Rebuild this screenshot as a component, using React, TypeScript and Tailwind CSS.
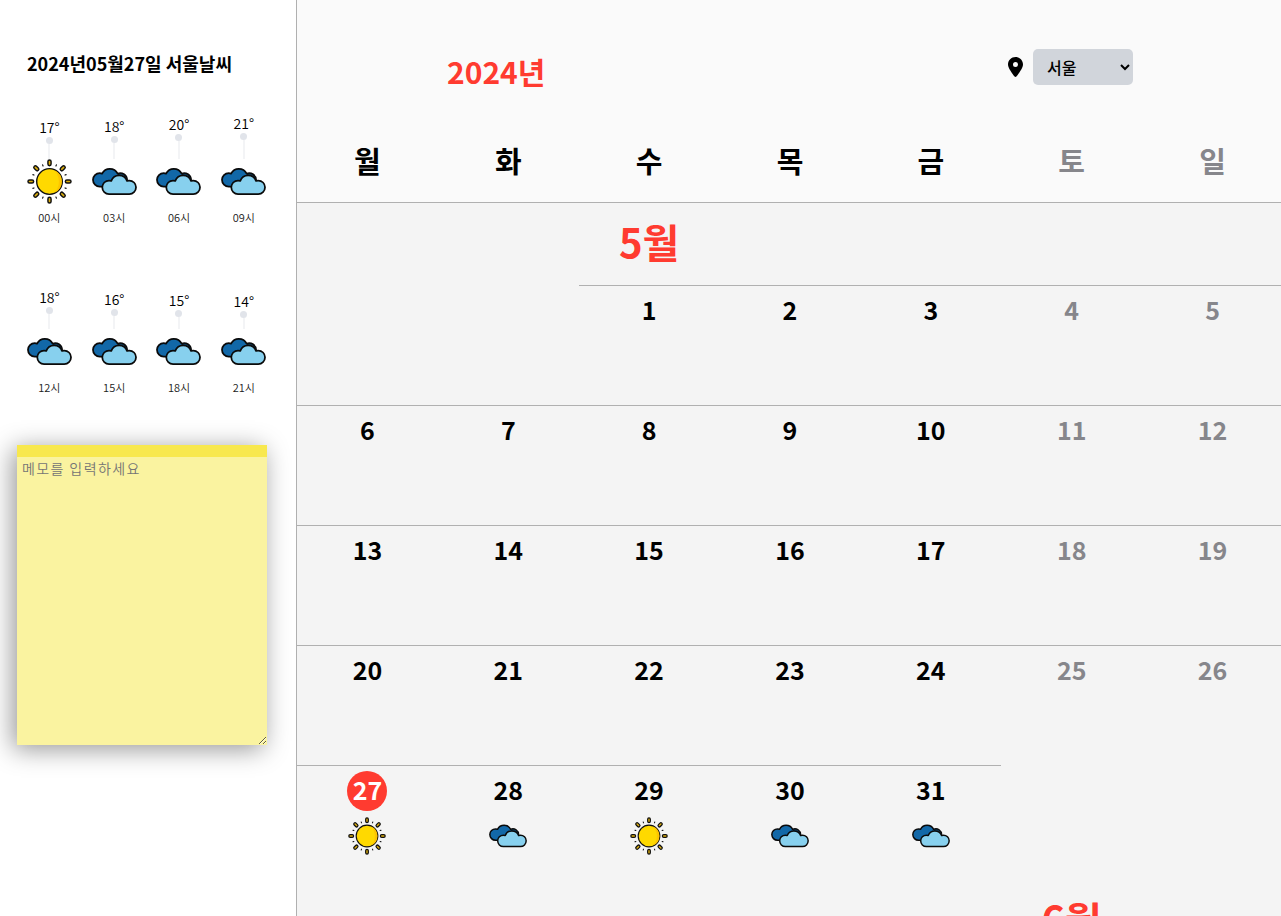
import React from 'react';

const KR = "font-['Noto_Sans_CJK_KR','Noto_Sans',sans-serif]";

function Sun({ className }: { className: string }) {
  const rays = [0, 45, 90, 135, 180, 225, 270, 315];
  return (
    <svg viewBox="0 0 46 46" className={className} aria-hidden="true">
      {rays.map((a) => (
        <g key={a} transform={`rotate(${a} 23 23)`}>
          <rect x="21.4" y="1" width="3.2" height="5.8" rx="1.6" fill="#dcae0e" stroke="#111" strokeWidth="1.5" />
          <path d="M23 4.6v1.2" stroke="#111" strokeWidth="1.2" strokeLinecap="round" transform="rotate(22.5 23 23)" />
        </g>
      ))}
      <circle cx="23" cy="23" r="13.1" fill="#ffd900" stroke="#111" strokeWidth="1.4" />
      <path d="M28 11.4a12.6 12.6 0 0 1 0 23.2a17 17 0 0 0 0-23.2z" fill="#fdc500" />
    </svg>
  );
}

function Clouds({ className }: { className: string }) {
  return (
    <svg viewBox="0 0 46 46" className={className} aria-hidden="true">
      <g stroke="#0a0a0a" strokeWidth="1.8" strokeLinejoin="round">
        <path
          d="M7.9 28.2a6.9 6.9 0 0 1 0-13.8q1.2 0 2.4.5a8.9 8.9 0 0 1 15.9 0a7 7 0 0 1 9.6 6.6q0 6-7 6.7z"
          fill="#1268a8"
        />
        <path d="M27 15.3q5.8-1.3 8.3 4.4l.4 2.6-6-1.5z" fill="#11507e" strokeWidth="0.8" />
        <path
          d="M17.4 35.8a6.9 6.9 0 0 1 0-13.8q1.4 0 2.3.4a8.6 8.6 0 0 1 16.1 0q1-.4 2.3-.4a6.9 6.9 0 0 1 0 13.8z"
          fill="#87d0ee"
        />
      </g>
    </svg>
  );
}

type Hour = { time: string; temp: number; stem: string; sunny?: boolean };

const morning: Hour[] = [
  { time: '00시', temp: 17, stem: 'h-[22px]', sunny: true },
  { time: '03시', temp: 18, stem: 'h-[23px]' },
  { time: '06시', temp: 20, stem: 'h-[25px]' },
  { time: '09시', temp: 21, stem: 'h-[26px]' },
];
const afternoon: Hour[] = [
  { time: '12시', temp: 18, stem: 'h-[22px]' },
  { time: '15시', temp: 16, stem: 'h-[20px]' },
  { time: '18시', temp: 15, stem: 'h-[19px]' },
  { time: '21시', temp: 14, stem: 'h-[18px]' },
];

function HourRow({ hours }: { hours: Hour[] }) {
  return (
    <div className="flex h-[126px] items-end">
      {hours.map((h) => (
        <div key={h.time} className="flex w-[64.8px] flex-col items-center">
          <span className="mb-px text-[14px] leading-[18px] font-[350]">
            {h.temp}
            <span className="inline-block font-[350]">°</span>
          </span>
          <div className={`flex flex-col items-center ${h.stem}`}>
            <span className="size-[7px] shrink-0 rounded-full bg-[#e1e4ea]" />
            <span className="w-[2px] grow bg-[#f3f4f6]" />
          </div>
          {h.sunny ? <Sun className="size-[45px]" /> : <Clouds className="size-[45px]" />}
          <span className="mt-[5px] text-[11px] leading-[16px] font-[350] text-[#222]">{h.time}</span>
        </div>
      ))}
    </div>
  );
}

function Sidebar() {
  return (
    <aside className="flex w-[297px] shrink-0 flex-col border-r border-[#b0b0b0] bg-white pl-[17px]">
      <h1 className="mt-[50px] ml-[10px] text-[18px] leading-[26px] font-bold text-black">
        2024년05월27일 서울날씨
      </h1>
      <div className="mt-[23px]">
        <HourRow hours={morning} />
      </div>
      <div className="mt-[44px]">
        <HourRow hours={afternoon} />
      </div>
      <textarea
        placeholder="메모를 입력하세요"
        className="mt-[50px] h-[300px] w-[250px] resize border-t-[12px] border-[#f8e84e] bg-[#faf3a0] px-[5px] py-px text-[14px] leading-[20px] font-[350] tracking-[1.4px] text-black shadow-[-4px_4px_24px_rgba(0,0,0,0.42)] outline-none placeholder:text-[#757575]"
      />
    </aside>
  );
}

const weekdays = ['월', '화', '수', '목', '금', '토', '일'];
const weeks = [
  [null, null, 1, 2, 3, 4, 5],
  [6, 7, 8, 9, 10, 11, 12],
  [13, 14, 15, 16, 17, 18, 19],
  [20, 21, 22, 23, 24, 25, 26],
  [27, 28, 29, 30, 31, null, null],
];
const sunnyDays = [27, 29];

function Day({ day, weekend }: { day: number | null; weekend: boolean }) {
  if (day === null) return <div className="h-[120px]" />;
  const today = day === 27;
  return (
    <div className="flex h-[120px] flex-col items-center border-t border-[#b0b0b0] pt-[5px]">
      <span
        className={`flex size-[40px] justify-center rounded-full text-[25px] leading-[36px] font-bold ${
          today ? 'bg-[#ff3b30] text-white' : weekend ? 'text-[#86868b]' : 'text-black'
        }`}
      >
        {day}
      </span>
      {day >= 27 &&
        (sunnyDays.includes(day) ? (
          <Sun className="mt-[6px] size-[38px]" />
        ) : (
          <Clouds className="mt-[6px] size-[38px]" />
        ))}
    </div>
  );
}

function Calendar() {
  return (
    <main className="flex min-w-0 flex-1 flex-col overflow-hidden bg-[#f4f4f4]">
      <header className="h-[203px] shrink-0 border-b border-[#b0b0b0] bg-[#fafafa]">
        <div className="flex h-[120px] items-start justify-between pr-[148px] pl-[150px]">
          <h2 className="mt-[48px] text-[30px] leading-[46px] font-bold text-[#ff3b30]">2024년</h2>
          <div className="mt-[49px] flex items-center">
            <svg viewBox="0 0 384 512" className="mr-[10px] h-[20px] w-[15px]" fill="#000" aria-hidden="true">
              <path d="M215.7 499.2C267 435 384 279.4 384 192C384 86 298 0 192 0S0 86 0 192c0 87.4 117 243 168.3 307.2c12.3 15.3 35.1 15.3 47.4 0zM192 128a64 64 0 1 1 0 128 64 64 0 1 1 0-128z" />
            </svg>
            <select className="h-[36px] w-[100px] rounded-[5px] bg-[#d1d5db] pl-[10px] text-[16px] font-medium text-black">
              <option>서울</option>
            </select>
          </div>
        </div>
        <div className="grid w-[986px] grid-cols-7 text-center text-[29px] leading-[80px] font-bold">
          {weekdays.map((d, i) => (
            <span key={d} className={i > 4 ? 'text-[#86868b]' : 'text-black'}>
              {d}
            </span>
          ))}
        </div>
      </header>
      <div className="grid h-[82px] w-[986px] shrink-0 grid-cols-7">
        <span className="col-start-3 text-center text-[40px] leading-[77px] font-bold text-[#ff3b30]">5월</span>
      </div>
      <div className="grid w-[986px] shrink-0 grid-cols-7">
        {weeks.flatMap((w, r) => w.map((d, c) => <Day key={`${r}-${c}`} day={d} weekend={c > 4} />))}
      </div>
      <div className="-mt-[4px] grid h-[82px] w-[986px] shrink-0 grid-cols-7">
        <span className="col-start-6 text-center text-[40px] leading-[77px] font-bold text-[#ff3b30]">6월</span>
      </div>
    </main>
  );
}

export default function App() {
  return (
    <div className={`flex h-screen overflow-hidden ${KR}`}>
      <Sidebar />
      <Calendar />
    </div>
  );
}
